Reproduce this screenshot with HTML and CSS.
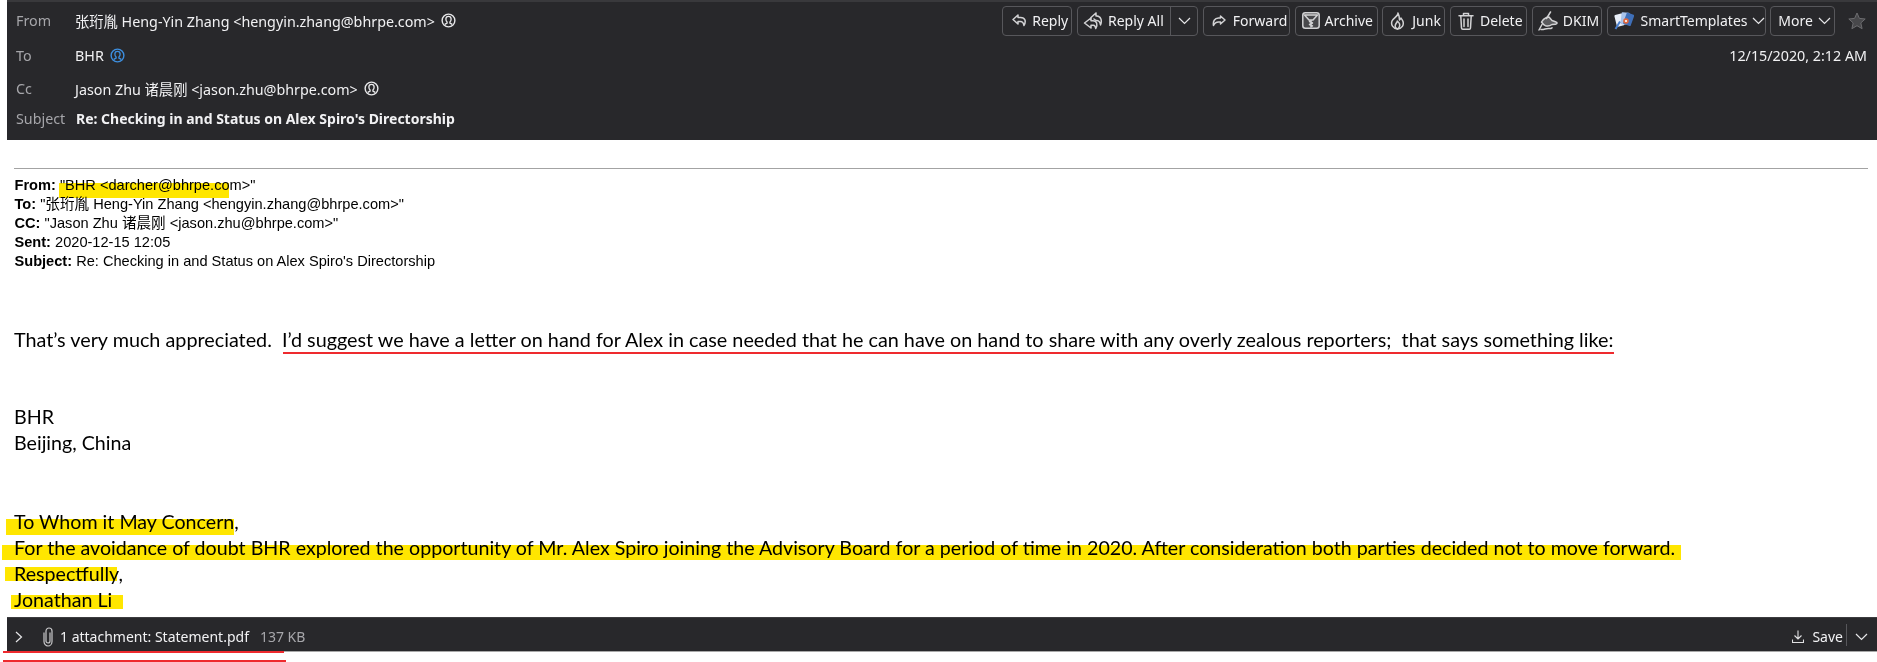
FILE: index.html
```html
<!DOCTYPE html>
<html lang="en">
	<head>
		<meta charset="UTF-8" />
		<title>Re: Checking in and Status on Alex Spiro's Directorship</title>
		<link rel="stylesheet" href="styles.css">
	</head>
	<body>
		<header class="msg-header">
			<div class="row row-from">
				<span class="label">From</span>
				<span class="value">张珩胤 Heng-Yin Zhang &lt;hengyin.zhang@bhrpe.com&gt;</span>
				<svg class="person" viewBox="0 0 16 16"><use href="#person" /></svg>
				<div class="toolbar">
					<button class="btn btn-reply"><svg class="icon i-reply" viewBox="0 0 15 13"><path d="M6 1 1 5.500 6 10V7.500h2.500c2 0 3 1.300 3.500 4 2.200-4 1.500-8-3.500-8H6z" /></svg>Reply</button>
					<div class="btn btn-split">
						<button class="part btn-replyall"><svg class="icon i-replyall" viewBox="0 0 20 18"><path d="M8 6 1.500 11 8 16v-2.800h2.500c1.200 0 1.900 1 2.300 3.300 2-3.700 1.300-7.700-2.800-7.700H8z" /><path d="M13 1 8 5.500M13 1v3h1c3.500.2 5.500 4 3.500 9-.3-2.500-1.300-4.300-3.500-4.500h-1L11 7" /></svg>Reply All</button>
						<button class="part caret-part"><svg class="chev" viewBox="0 0 13 8"><path d="m1 1 5.500 5.500L12 1" /></svg></button>
					</div>
					<button class="btn btn-forward"><svg class="icon i-forward" viewBox="0 0 14 12"><path d="M8.500 1 13 5 8.500 9V7H6.500c-2.500 0-3.800.8-5 3.500C.8 6.500 2.500 3 6.500 3h2z" /></svg>Forward</button>
					<button class="btn btn-archive"><svg class="icon i-archive" viewBox="0 0 18 17"><rect class="box" x=".8" y=".8" width="16.400" height="15.400" rx="2.500" /><path d="M2.500 3h13L11 8H7zM9 8v7M7.500 9.500l3 1.500-3 1.500 3 1.500" /></svg>Archive</button>
					<button class="btn btn-junk"><svg class="icon i-junk" viewBox="0 0 15 18"><path d="M8 1c.5 3-4.500 5-6 8-1.300 3.500.8 7.500 5.500 8 4.700-.5 6.500-4 5.500-7.500-.4-1.500-1.500-2.500-2-3.500-.4 1-1 1.500-1.500 2C9.500 5.500 9 3 8 1z" /><path d="M7.500 17c-2.500-1-3-3-1.500-5.500.6-1 1.300-1.500 1.300-2.500 1.200 1 3.200 3.500 2 6-.4.800-1 1.500-1.800 2z" /></svg>Junk</button>
					<button class="btn btn-delete"><svg class="icon i-delete" viewBox="0 0 16 18"><path d="M1 3.800h14M5.500 3.500V1.500h5v2M2.800 4l.7 12a1.300 1.300 0 0 0 1.300 1.200h6.400a1.300 1.300 0 0 0 1.300-1.200l.7-12M6 7v7.500M10 7v7.500" /></svg>Delete</button>
					<button class="btn btn-dkim"><svg class="icon i-dkim" viewBox="0 0 20 20"><path class="hand" d="M3.500 11c1-2 2.500-3.500 5-4.500l2.500-.5 3 3.500 4 1.500c1.500.5 1.500 2-.5 2.200l-3.500.3c-2 1.500-4 2-6.500 1.300-1.500-.5-2.500-1.500-4-3.800z" /><path d="M12.500 1 8.500 7.500M1 19l3-5.500M3 18.500c3 .5 5-1.500 8-1 1 .1 2 .1 3-.7" /></svg>DKIM</button>
					<button class="btn btn-smart"><svg class="i-cards" viewBox="0 0 20 19"><rect x="1.500" y="3" width="8" height="12" rx="1" fill="#e8eef8" transform="rotate(-14 6 9)" /><rect x="7" y="1.500" width="8" height="12" rx="1" fill="#a9c3ea" transform="rotate(6 11 8)" /><rect x="10.500" y="2.500" width="8" height="12" rx="1" fill="#3f6fb8" transform="rotate(20 15 9)" /><circle cx="12" cy="10" r="2.800" fill="#e2673d" /><circle cx="12" cy="10" r="1.100" fill="white" /><path d="M1.500 18 6 10.500" stroke="#4a80cf" stroke-width="2" fill="none" /></svg>SmartTemplates<svg class="chev" viewBox="0 0 13 8"><path d="m1 1 5.500 5.500L12 1" /></svg></button>
					<button class="btn btn-more">More<svg class="chev" viewBox="0 0 13 8"><path d="m1 1 5.500 5.500L12 1" /></svg></button>
					<svg class="star" viewBox="0 0 18 18"><path d="m9 1 2.400 5.400 5.800.6-4.400 3.900 1.300 5.800L9 13.700 3.900 16.700l1.300-5.800L.8 7l5.800-.6z" /></svg>
				</div>
			</div>
			<div class="row row-to">
				<span class="label">To</span>
				<span class="value">BHR</span>
				<svg class="person blue" viewBox="0 0 16 16"><use href="#person" /></svg>
				<span class="date">12/15/2020, 2:12 AM</span>
			</div>
			<div class="row row-cc">
				<span class="label">Cc</span>
				<span class="value">Jason Zhu 诸晨刚 &lt;jason.zhu@bhrpe.com&gt;</span>
				<svg class="person" viewBox="0 0 16 16"><use href="#person" /></svg>
			</div>
			<div class="row row-subject">
				<span class="label">Subject</span>
				<span class="subject">Re: Checking in and Status on Alex Spiro's Directorship</span>
			</div>
		</header>

		<main class="msg-body">
			<hr class="rule" />
			<div class="quoted">
				<div><b>From:</b> "BHR &lt;darcher@bhrpe.com&gt;"</div>
				<div><b>To:</b> "张珩胤 Heng-Yin Zhang &lt;hengyin.zhang@bhrpe.com&gt;"</div>
				<div><b>CC:</b> "Jason Zhu 诸晨刚 &lt;jason.zhu@bhrpe.com&gt;"</div>
				<div><b>Sent:</b> 2020-12-15 12:05</div>
				<div><b>Subject:</b> Re: Checking in and Status on Alex Spiro's Directorship</div>
			</div>
			<p class="para first">That’s very much appreciated.&nbsp; I’d suggest we have a letter on hand for Alex in case needed that he can have on hand to share with any overly zealous reporters;&nbsp; that says something like:</p>
			<p class="para sign">BHR<br />Beijing, China</p>
			<p class="para letter">To Whom it May Concern,<br />For the avoidance of doubt BHR explored the opportunity of Mr. Alex Spiro joining the Advisory Board for a period of time in 2020. After consideration both parties decided not to move forward.<br />Respectfully,<br />Jonathan Li</p>
		</main>

		<footer class="attach-bar">
			<svg class="toggle" viewBox="0 0 8 12"><path d="m1 1 5.500 5L1 11" /></svg>
			<svg class="clip" viewBox="0 0 12 20"><path d="M8 5.500V14a2 2 0 0 1-4 0V4a3 3 0 0 1 6 0v10.500a4 4.500 0 0 1-8 0V5.500" /></svg>
			<span class="attach-name">1 attachment: Statement.pdf</span>
			<span class="attach-size">137 KB</span>
			<div class="save">
				<svg class="save-icon" viewBox="0 0 12 13"><path d="M6 .5v8M2.500 5.500 6 9l3.500-3.500M.5 9.500v3h11v-3" /></svg>
				<span>Save</span>
				<i class="divider"></i>
				<svg class="chev" viewBox="0 0 13 8"><path d="m1 1 5.500 5.500L12 1" /></svg>
			</div>
		</footer>

		<!-- marker pen annotations drawn over the screenshot -->
		<div class="mark hl hl-from"></div>
		<div class="mark hl hl-whom"></div>
		<div class="mark hl hl-doubt"></div>
		<div class="mark hl hl-resp"></div>
		<div class="mark hl hl-li"></div>
		<div class="mark red red-sentence"></div>
		<div class="mark red red-attach"></div>
		<div class="mark red red-under"></div>

		<svg class="defs" width="0" height="0">
			<symbol id="person" viewBox="0 0 16 16">
				<circle cx="8" cy="8" r="6.800" fill="none" stroke="currentColor" stroke-width="1.500" />
				<path d="M5.200 6.500a2.800 3 0 0 1 5.600 0c0 1.500-.5 2.500-1.300 3.200v1l2.500 1.500M5.200 6.500c0 1.500.5 2.500 1.300 3.200v1L4 12.200" fill="none" stroke="currentColor" stroke-width="1.400" />
			</symbol>
		</svg>
	</body>
</html>
```

FILE: styles.css
```css
html,
body {
	margin: 0;
	padding: 0;
	background-color: white;
}
body {
	position: relative;
	width: 1877px;
	height: 662px;
	overflow: hidden;
	font-family: "Noto Sans", "Noto Sans CJK SC", sans-serif;
}
.defs {
	position: absolute;
}

/* message header */
.msg-header {
	margin-left: 7px;
	height: 137px;
	padding-top: 1px;
	border-top: 2px solid #39393c;
	background-color: #28282b;
	color: #f1f1f3;
	font-size: 14.300px;
}
.row {
	display: flex;
	align-items: center;
	padding-left: 9px;
}
.row-from {
	height: 35px;
}
.row-to {
	height: 34px;
	padding-right: 10px;
}
.row-cc {
	height: 32px;
}
.row-subject {
	height: 28px;
}
.label {
	width: 59px;
	flex-shrink: 0;
	color: #a6a6aa;
}
.subject {
	font-size: 14px;
	font-weight: 700;
	margin-left: 1px;
}
.person {
	width: 15px;
	height: 15px;
	margin-left: 6px;
	color: #e8e8ea;
}
.person.blue {
	color: #3d8fe0;
}
.date {
	margin-left: auto;
}

/* toolbar */
.toolbar {
	display: flex;
	align-items: center;
	gap: 4.750px;
	margin-left: auto;
	padding-right: 11px;
}
.btn,
.part {
	display: flex;
	align-items: center;
	height: 30px;
	box-sizing: border-box;
	padding: 0;
	background: none;
	border: none;
	color: #f1f1f3;
	font: inherit;
	font-size: 14px;
}
.btn {
	border: 1px solid #57575b;
	border-radius: 4px;
}
.part {
	height: 28px;
}
.btn-reply {
	width: 70px;
	padding-left: 9px;
	gap: 5px;
}
.btn-split {
	width: 121px;
}
.btn-replyall {
	width: 93px;
	padding-left: 5px;
	gap: 5px;
	border-right: 1px solid #57575b;
}
.caret-part {
	flex: 1;
	justify-content: center;
}
.btn-forward {
	width: 87px;
	padding-left: 8px;
	gap: 7px;
}
.btn-archive {
	width: 83px;
	padding-left: 6px;
	gap: 5px;
}
.btn-junk {
	width: 63px;
	padding-left: 7px;
	gap: 7px;
}
.btn-delete {
	width: 77px;
	padding-left: 7px;
	gap: 6px;
}
.btn-dkim {
	width: 70px;
	padding-left: 5px;
	gap: 5px;
}
.btn-smart {
	width: 159px;
	padding-left: 6px;
	gap: 4px;
}
.btn-more {
	width: 65px;
	padding-left: 7px;
	gap: 5px;
}
.icon {
	fill: none;
	stroke: #d2d2d4;
	stroke-width: 1.500;
	stroke-linejoin: round;
	stroke-linecap: round;
}
.i-reply {
	width: 15px;
	height: 13px;
}
.i-replyall {
	width: 20px;
	height: 18px;
}
.i-forward {
	width: 14px;
	height: 12px;
}
.i-archive {
	width: 18px;
	height: 17px;
}
.i-archive .box {
	fill: #48484b;
}
.i-junk {
	width: 15px;
	height: 18px;
}
.i-delete {
	width: 16px;
	height: 18px;
}
.i-dkim {
	width: 20px;
	height: 20px;
}
.i-dkim .hand {
	fill: #5a5a5d;
}
.i-cards {
	width: 20px;
	height: 19px;
	margin-right: 3px;
}
.chev {
	width: 13px;
	height: 8px;
	fill: none;
	stroke: #e6e6e8;
	stroke-width: 1.200;
}
.star {
	width: 18px;
	height: 18px;
	margin-left: 8px;
	fill: #48484b;
	stroke: #6d6d70;
}

/* message body */
.msg-body {
	padding: 0 9px 0 14px;
	color: black;
}
.rule {
	height: 1px;
	margin: 28px 0 0 0;
	border: none;
	background-color: #a3a3a3;
}
.quoted {
	margin-top: 7px;
	margin-left: .5px;
	font-family: "Liberation Sans", "Noto Sans CJK SC", sans-serif;
	font-size: 14.600px;
	line-height: 19px;
}
.para {
	margin: 0;
	font-family: Lato, "Noto Sans", sans-serif;
	font-size: 19.650px;
	line-height: 26px;
}
.first {
	margin-top: 55px;
	font-size: 19.800px;
}
.sign {
	margin-top: 52px;
}
.letter {
	margin-top: 53px;
}

/* attachment bar */
.attach-bar {
	position: absolute;
	left: 7px;
	right: 0;
	top: 617px;
	height: 35px;
	box-sizing: border-box;
	display: flex;
	align-items: center;
	padding: 4px 9px 0 8px;
	background-color: #28282b;
	border-top: 1px solid #3c3c3f;
	border-bottom: 1px solid #a8a8a8;
	color: #f1f1f3;
	font-size: 14px;
}
.toggle {
	width: 8px;
	height: 12px;
	fill: none;
	stroke: #e6e6e8;
	stroke-width: 1.200;
}
.clip {
	width: 12px;
	height: 20px;
	margin-left: 19px;
	fill: none;
	stroke: #c8c8ca;
	stroke-width: 1.200;
}
.attach-name {
	margin-left: 6px;
}
.attach-size {
	margin-left: 11px;
	color: #a6a6aa;
}
.save {
	display: flex;
	align-items: center;
	margin-left: auto;
}
.save-icon {
	width: 12px;
	height: 13px;
	fill: none;
	stroke: #e0e0e2;
	stroke-width: 1.100;
}
.save span {
	margin-left: 8px;
}
.divider {
	width: 1px;
	height: 22px;
	margin: -3px 8px 0 3px;
	background-color: #57575b;
}

/* annotations */
.mark {
	position: absolute;
}
.hl {
	background-color: #ffe600;
	mix-blend-mode: multiply;
}
.hl-from {
	left: 59px;
	top: 183px;
	width: 170px;
	height: 15px;
}
.hl-whom {
	left: 6px;
	top: 519px;
	width: 228px;
	height: 16px;
}
.hl-doubt {
	left: 2px;
	top: 545px;
	width: 1679px;
	height: 15px;
}
.hl-resp {
	left: 5px;
	top: 567px;
	width: 112px;
	height: 14px;
}
.hl-li {
	left: 11px;
	top: 595px;
	width: 112px;
	height: 14px;
}
.red {
	height: 2px;
	background-color: #ee2a2e;
}
.red-sentence {
	left: 283px;
	top: 352px;
	width: 1331px;
}
.red-attach {
	left: 3px;
	top: 651px;
	width: 281px;
}
.red-under {
	left: 3px;
	top: 660px;
	width: 283px;
}
```
